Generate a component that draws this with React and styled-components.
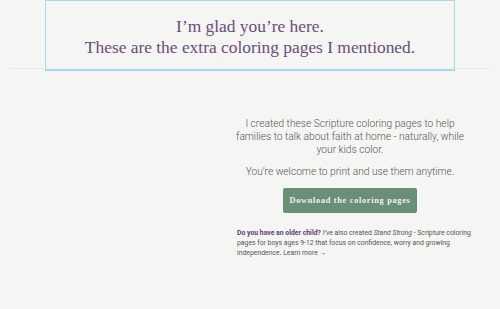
import React from 'react';
import styled, { createGlobalStyle } from 'styled-components';

const GlobalStyle = createGlobalStyle`
  html, body {
    margin: 0;
    padding: 0;
    background: #f5f5f3;
  }
  * {
    box-sizing: border-box;
  }
`;

const Page = styled.div`
  width: 500px;
  height: 309px;
  background: #f5f5f3;
  overflow: hidden;
`;

const Header = styled.header`
  margin: 0 10px;
  height: 69px;
  border-bottom: 1px solid #e7e7e4;
  display: flex;
  justify-content: center;
`;

const HeadingBox = styled.div`
  width: 410px;
  height: 71px;
  flex-shrink: 0;
  background: #f5f5f3;
  border: 1px solid #a9d9ee;
  border-bottom-width: 2px;
  display: flex;
  align-items: center;
  justify-content: center;
`;

const Heading = styled.h1`
  margin: 0;
  padding-top: 3px;
  font-family: 'Liberation Serif', serif;
  font-weight: normal;
  font-size: 17.4px;
  line-height: 21px;
  color: #6b4d7c;
  text-align: center;
`;

const Main = styled.main`
  display: flex;
  justify-content: flex-end;
  padding: 48px 35px 0 0;
`;

const Column = styled.section`
  width: 230px;
  display: flex;
  flex-direction: column;
  align-items: center;
`;

const Lead = styled.p`
  margin: 0 0 ${props => props.$gap || 0}px;
  font-family: Roboto, 'Liberation Sans', sans-serif;
  font-weight: 300;
  font-size: 10.2px;
  line-height: 13px;
  color: #555555;
  text-align: center;
`;

const Button = styled.a`
  display: flex;
  align-items: center;
  justify-content: center;
  width: 134px;
  height: 25px;
  margin-top: 10px;
  border-radius: 2px;
  background: #6a8f78;
  color: #f2f1ea;
  font-family: 'Liberation Serif', serif;
  font-size: 8.3px;
  font-weight: 700;
  letter-spacing: 0.7px;
  text-decoration: none;
`;

const Note = styled.p`
  align-self: stretch;
  margin: 15px -10px 0 2px;
  font-family: Roboto, 'Liberation Sans', sans-serif;
  font-size: 6.85px;
  line-height: 10px;
  color: #555555;
  text-align: left;
`;

const Strong = styled.strong`
  color: #5e3f73;
  font-weight: 700;
`;

export default function App() {
  return (
    <Page>
      <GlobalStyle />
      <Header>
        <HeadingBox>
          <Heading>
            I’m glad you’re here.
            <br />
            These are the extra coloring pages I mentioned.
          </Heading>
        </HeadingBox>
      </Header>
      <Main>
        <Column>
          <Lead $gap={9}>
            I created these Scripture coloring pages to help families to talk about faith at
            home - naturally, while your kids color.
          </Lead>
          <Lead>You’re welcome to print and use them anytime.</Lead>
          <Button href="#">Download the coloring pages</Button>
          <Note>
            <Strong>Do you have an older child?</Strong> I’ve also created <em>Stand Strong</em> -
            Scripture coloring pages for boys ages 9-12 that focus on confidence, worry and growing
            independence. Learn more →
          </Note>
        </Column>
      </Main>
    </Page>
  );
}
